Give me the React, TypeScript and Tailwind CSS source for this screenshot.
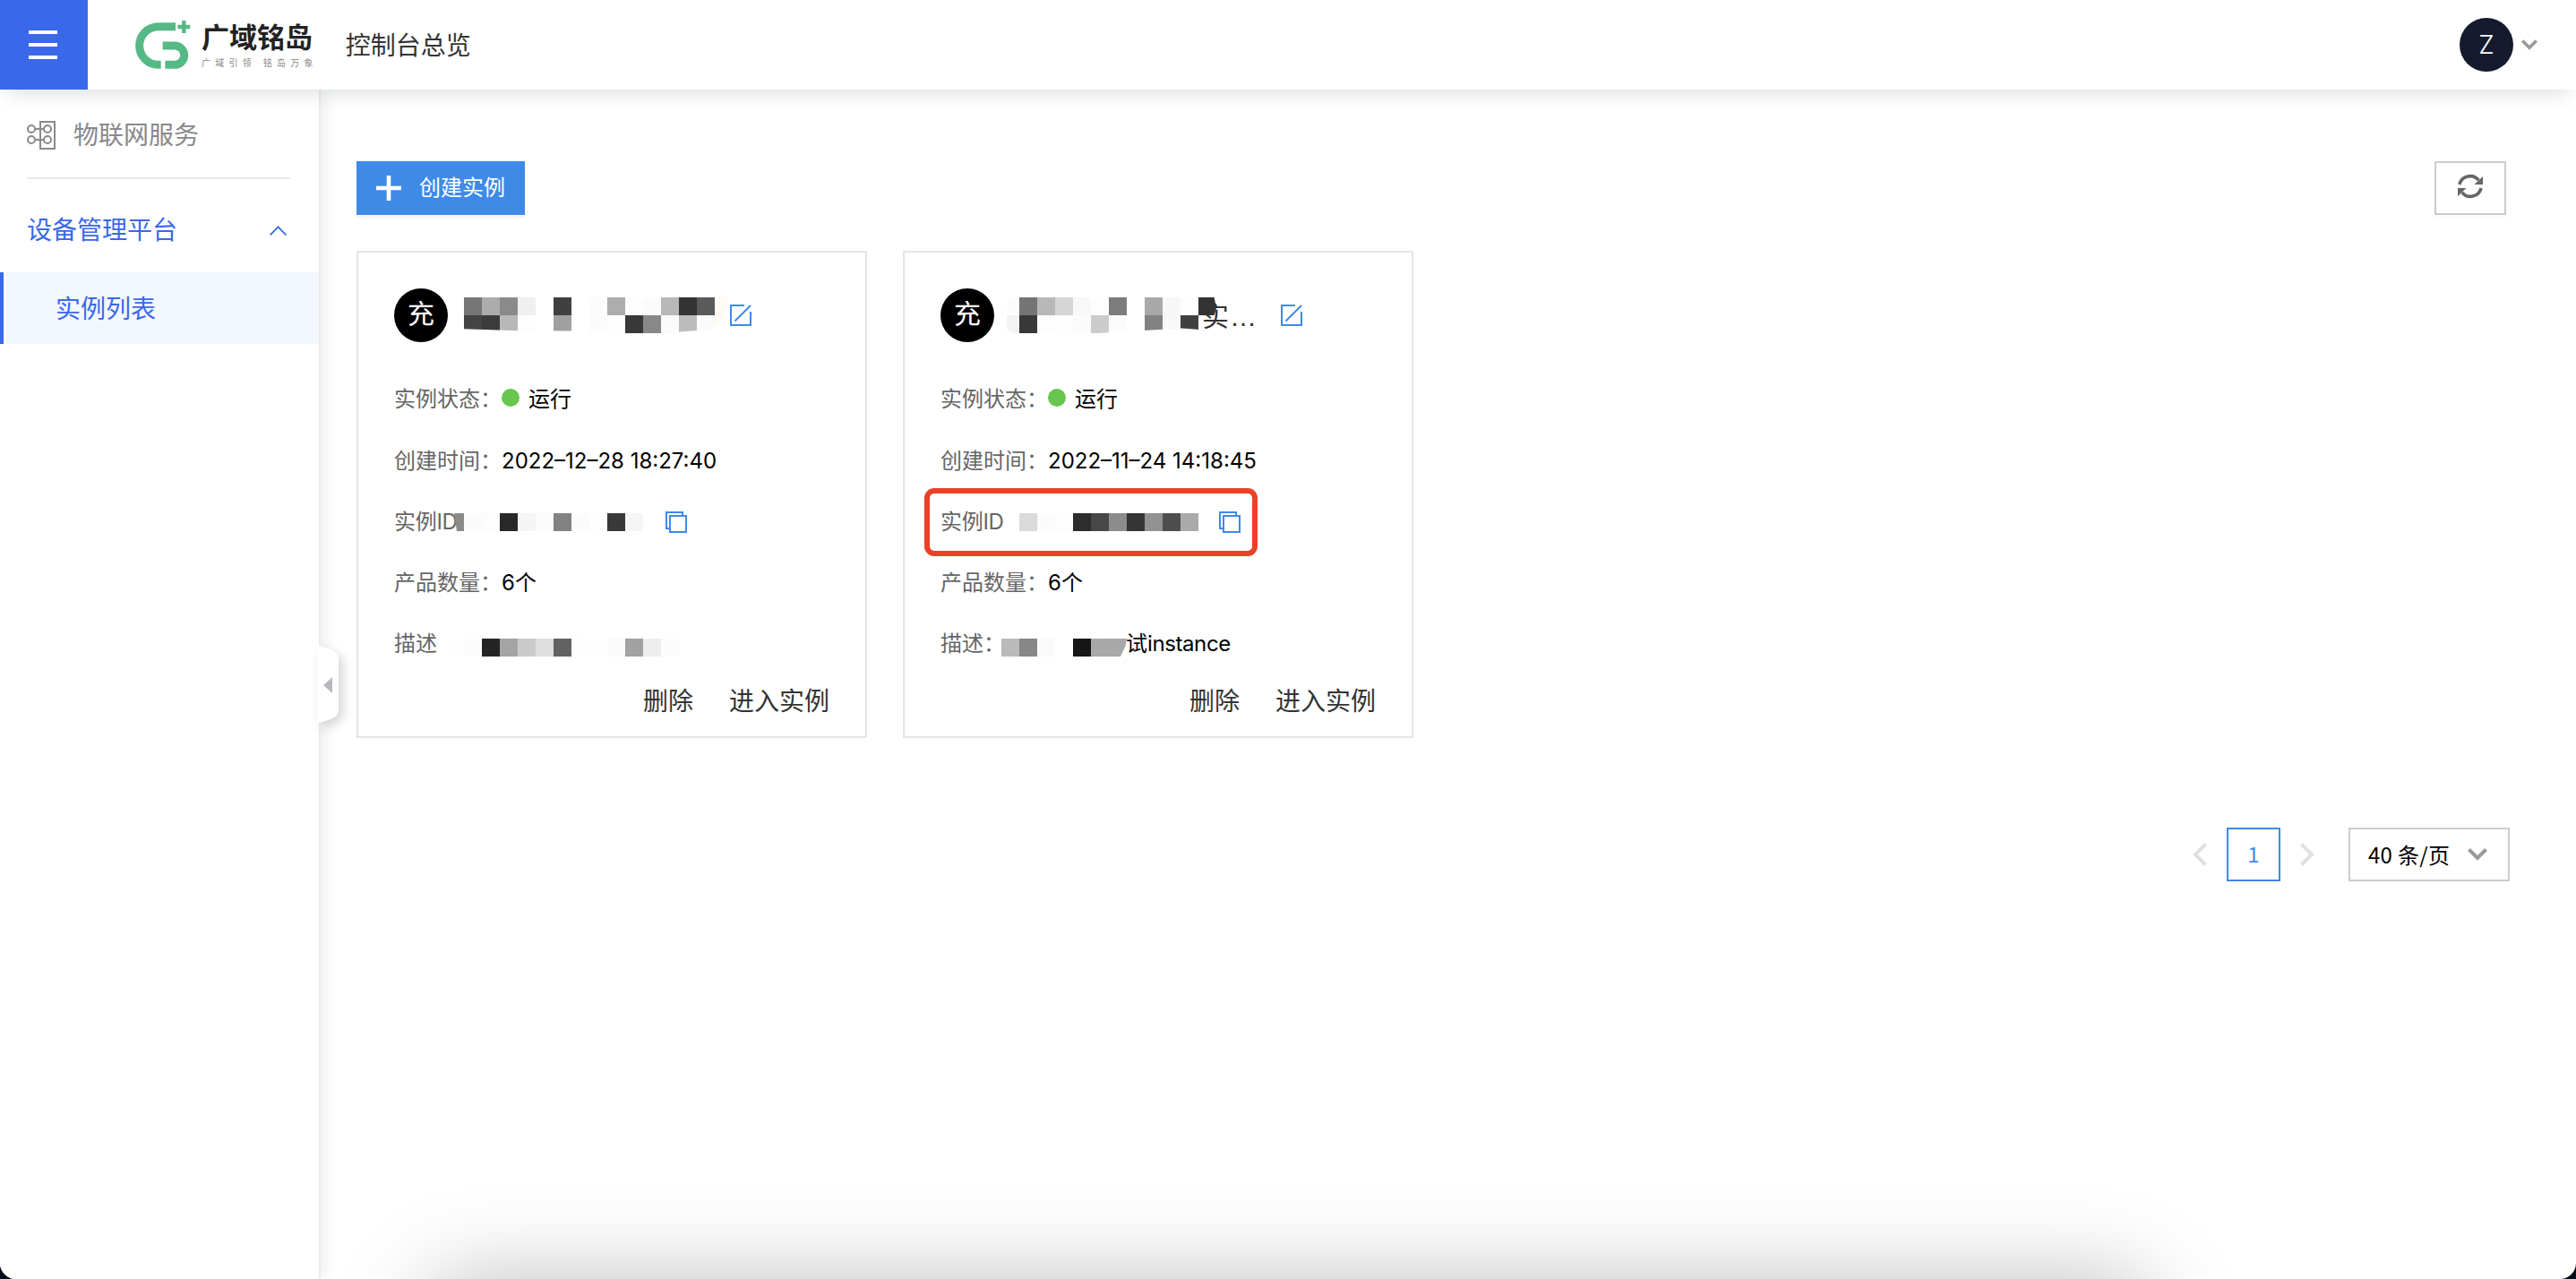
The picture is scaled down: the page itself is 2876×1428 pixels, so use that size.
import type { ReactNode } from 'react'

type Blur = { cells: string[][]; className?: string }
type Instance = {
  id: string
  createdAt: string
  name: ReactNode
  instanceId: ReactNode
  desc: ReactNode
  highlight?: boolean
}

const W = '#ffffff'

function Logo() {
  return (
    <svg className="h-[54px] w-[62px] shrink-0" viewBox="62 69 186 162" fill="none" stroke="#55b985" strokeWidth="27">
      <path d="M197 89H140a64 64 0 0 0 0 128H148" />
      <path d="M154 153H194a32 32 0 0 1 0 64H162" />
      <path d="M204 90H246M225 69V111" strokeWidth="13" />
    </svg>
  )
}

function IconService() {
  return (
    <svg className="h-8 w-8 shrink-0" viewBox="0 0 32 32" fill="none" stroke="#8a8a8e" strokeWidth="2">
      <path d="M15 1h16v30H15zM9 9h10M9 21h10" />
      <circle cx="5" cy="9" r="4" />
      <circle cx="23" cy="9" r="4" />
      <circle cx="5" cy="21" r="4" />
      <circle cx="23" cy="21" r="4" />
    </svg>
  )
}

function IconEdit() {
  return (
    <svg className="relative z-10 h-6 w-6 shrink-0" viewBox="0 0 24 24" fill="none" stroke="#3f8ae6" strokeWidth="2">
      <path d="M16 1H1v22h22V8M5.5 18.5L23 1" />
    </svg>
  )
}

function IconCopy() {
  return (
    <svg className="h-6 w-6 shrink-0" viewBox="0 0 24 24" fill="none" stroke="#3f8ae6" strokeWidth="2">
      <path d="M5 5h18v18H5zM5 19H1V1h18v4" />
    </svg>
  )
}

function IconRefresh() {
  return (
    <svg className="h-7 w-7" viewBox="0 0 28 28" fill="none" stroke="#666" strokeWidth="3.6">
      <path d="M1.9 12A12.2 12.2 0 0 1 23.2 7.2" />
      <path d="M26.1 16A12.2 12.2 0 0 1 4.8 20.8" />
      <path d="M28 3v9H18.500z M0 25v-9H9.500z" fill="#666" stroke="none" />
    </svg>
  )
}

// pixelated block that hides private values
function Mosaic({ cells, className = '' }: Blur) {
  return (
    <div className={`flex shrink-0 flex-col ${className}`}>
      {cells.map((row, i) => (
        <div key={i} className="flex">
          {row.map((c, j) => (
            <i key={j} className="h-5 w-5" style={{ background: c }} />
          ))}
        </div>
      ))}
    </div>
  )
}

const INSTANCES: Instance[] = [
  {
    id: 'a',
    createdAt: '2022–12–28 18:27:40',
    name: (
      <>
        <Mosaic
          className="ml-[18px] mr-[-3px] [clip-path:polygon(0_0,98%_0,97%_60%,92%_90%,82%_95%,76%_100%,60%_100%,45%_94%,20%_93%,0_88%)]"
          cells={[
            ['#767676', '#acacac', '#8a8a8a', '#f0f0f0', W, '#404040', W, '#fcfcfc', '#adadad', '#fdfdfd', '#fbfbfb', '#b8b8b8', '#333333', '#5a5a5a', '#fffaf3'],
            ['#444444', '#3c3c3c', '#b8b8b8', '#fdfdfd', W, '#a0a0a0', W, '#fbfbfb', '#fefefe', '#383838', '#888888', '#fafafa', '#bcbcbc', '#fbfbfb', '#fffaf3'],
          ]}
        />
        <IconEdit />
      </>
    ),
    instanceId: (
      <>
        <Mosaic
          className="ml-[-13px] mr-[25px] [clip-path:polygon(9px_0,100%_0,100%_100%,12px_100%)]"
          cells={[['#8a8a8a', '#fbfbfb', '#fdfdfd', '#282828', '#f5f5f5', '#fcfcfc', '#828282', '#fbfbfb', '#fefefe', '#393939', '#f5f5f5']]}
        />
        <IconCopy />
      </>
    ),
    desc: (
      <>
        描述
        <Mosaic
          className="ml-[10px] mt-2"
          cells={[['#fefefe', '#fcfcfc', '#242424', '#a4a4a4', '#cacaca', '#dedede', '#626262', '#fdfdfd', '#fefefe', '#fafafa', '#a2a2a2', '#eeeeee', '#fcfcfc']]}
        />
      </>
    ),
  },
  {
    id: 'b',
    createdAt: '2022–11–24 14:18:45',
    name: (
      <>
        <Mosaic
          className="z-10 ml-2 [clip-path:polygon(10px_0,99%_0,100%_30%,97%_90%,92%_90%,84%_86%,68%_92%,45%_100%,14px_100%,6px_88%,6px_30%)]"
          cells={[
            ['#fcfcfc', '#747474', '#b8b8b8', '#d5d5d5', '#f8f8f8', '#fdfdfd', '#7c7c7c', W, '#a9a9a9', '#f7f7f7', '#fdfdfd', '#333333'],
            ['#f3f3f3', '#383838', '#fdfdfd', '#fefefe', '#fbfbfb', '#cccccc', '#fcfcfc', W, '#828282', '#f8f8f8', '#404040', 'transparent'],
          ]}
        />
        <span className="ml-[-16px] mr-[24px] mt-[3px] text-[30px] leading-10 text-[#333]">
          实<span className="ml-px font-['Liberation_Sans'] tracking-[3px]">…</span>
        </span>
        <IconEdit />
      </>
    ),
    instanceId: (
      <>
        <Mosaic
          className="ml-[17px] mr-[23px]"
          cells={[['#dadada', '#fbfbfb', '#fdfdfd', '#2d2d2d', '#484848', '#8c8c8c', '#353535', '#929292', '#4e4e4e', '#aaaaaa']]}
        />
        <IconCopy />
      </>
    ),
    desc: (
      <>
        描述：
        <Mosaic
          className="ml-[-4px] mr-[-1px] mt-2 z-10 [clip-path:polygon(0_0,100%_0,99%_40%,95%_100%,0_100%)]"
          cells={[['#bababa', '#878787', '#fafafa', W, '#161616', '#a9a9a9', '#a8a8a8']]}
        />
        <span className="text-black">
          试<span className="tracking-[-0.4px]">instance</span>
        </span>
      </>
    ),
    highlight: true,
  },
]

function InstanceCard({ item }: { item: Instance }) {
  return (
    <article className="h-[544px] w-[570px] border-2 border-[#e4e4ea] px-10 pt-10 text-2xl text-[#666]">
      <div className="flex h-[60px] items-center whitespace-nowrap">
        <div className="flex h-[60px] w-[60px] shrink-0 items-center justify-center rounded-full bg-black pb-0.5 text-[30px] text-white">充</div>
        {item.name}
      </div>
      <div className="mt-[30px] whitespace-nowrap">
        <div className="flex h-[68px] items-center">
          实例状态：
          <span className="mb-1 h-5 w-5 rounded-full bg-[#67c64e]" />
          <span className="ml-2.5 text-black">运行</span>
        </div>
        <div className="flex h-[69px] items-center">
          创建时间：
          <span className="text-black">{item.createdAt}</span>
        </div>
        <div className="relative flex h-[68px] items-center">
          <span className="w-[71px] shrink-0 tracking-[-0.3px]">实例ID</span>
          {item.instanceId}
          {item.highlight && (
            <div className="absolute left-[-10px] top-[-4px] ml-[-8px] h-[76px] w-[372px] rounded-[11px] border-6 border-[#eb4128]" />
          )}
        </div>
        <div className="flex h-[68px] items-center">
          产品数量：
          <span className="text-black">6个</span>
        </div>
        <div className="flex h-[68px] items-center">{item.desc}</div>
      </div>
      <div className="flex h-[60px] items-center justify-end gap-10 pt-0.5 text-[28px] text-[#333]">
        <button>删除</button>
        <button>进入实例</button>
      </div>
    </article>
  )
}

function Header() {
  return (
    <header className="relative z-20 flex h-[100px] items-center bg-white shadow-[0_12px_20px_-8px_rgba(20,50,40,0.15)]">
      <button className="flex h-[100px] w-[98px] flex-col justify-center gap-2.5 bg-[#3a68eb] pl-8">
        <i className="h-1 w-8 bg-white" />
        <i className="h-1 w-8 bg-white" />
        <i className="h-1 w-8 bg-white" />
      </button>
      <div className="ml-[53px] flex items-center">
        <Logo />
        <div className="ml-3 flex flex-col">
          <b className="text-[31px] leading-9 text-[#222]">广域铭岛</b>
          <span className="mt-1 whitespace-pre text-[10px] leading-3 tracking-[5.2px] text-[#888]">广域引领 铭岛万象</span>
        </div>
      </div>
      <h1 className="ml-[31px] pt-0.5 text-[28px] text-[#333]">控制台总览</h1>
      <div className="ml-auto mr-[43px] flex items-center gap-[9px]">
        <div className="flex h-[60px] w-[60px] items-center justify-center rounded-full bg-[#151a2e] text-[28px] font-light text-white">Z</div>
        <svg className="h-3 w-[18px]" viewBox="0 0 18 12" fill="none" stroke="#999" strokeWidth="3.5">
          <path d="M1.200 1.500L9 9.300l7.800-7.800" />
        </svg>
      </div>
    </header>
  )
}

function Sidebar() {
  return (
    <aside className="relative z-10 w-[356px] shrink-0 bg-white text-[28px] shadow-[2px_0_0_#ececec,6px_0_16px_rgba(0,0,0,0.08)]">
      <div className="ml-[30px] mr-8 flex h-[100px] items-center gap-5 border-b-2 border-[#e8e8e8] pt-1 text-[#88888c]">
        <IconService />
        物联网服务
      </div>
      <div className="flex h-[104px] items-center justify-between pl-[30px] pr-9 pt-2.5 text-[#3a68eb]">
        设备管理平台
        <svg className="h-[11px] w-[19px]" viewBox="0 0 19 11" fill="none" stroke="#3a68eb" strokeWidth="1.800">
          <path d="M.6 10.400L9.500 1.400l8.900 9" />
        </svg>
      </div>
      <div className="flex h-20 items-center border-l-4 border-[#3a68eb] bg-[#f3f7ff] pl-[58px] pt-0.5 text-[#3a68eb]">实例列表</div>
      <svg className="absolute left-[354px] top-[620px] h-[88px] w-6 drop-shadow-[5px_5px_6px_rgba(0,0,0,0.16)]" viewBox="0 0 24 88">
        <path d="M0 0L15 5Q24 8 24 16V72Q24 80 15 83L0 88z" fill="#fff" />
        <path d="M7 45L17 36v18z" fill="#b8b9be" />
      </svg>
    </aside>
  )
}

function Pagination() {
  return (
    <div className="mt-[100px] flex items-center justify-end pr-[74px] text-2xl">
      <svg className="h-[26px] w-4" viewBox="0 0 16 26" fill="none" stroke="#e0e0e0" strokeWidth="4">
        <path d="M14.500 1.500L3 13l11.500 11.500" />
      </svg>
      <button className="ml-[22px] mr-[22px] h-[60px] w-[60px] border-2 border-[#3f8ae6] pb-0.5 text-[#3f8ae6] font-['Noto_Sans_CJK_SC',sans-serif]">1</button>
      <svg className="h-[26px] w-4" viewBox="0 0 16 26" fill="none" stroke="#e0e0e0" strokeWidth="4">
        <path d="M1.500 1.500L13 13 1.500 24.500" />
      </svg>
      <div className="ml-[38px] flex h-[60px] w-[180px] items-center justify-between border-2 border-[#ccc] pl-5 pr-[23px] text-black font-['Noto_Sans_CJK_SC',sans-serif]">
        <span className="tracking-[0.3px]">40 条/页</span>
        <svg className="h-[14px] w-[22px]" viewBox="0 0 22 14" fill="none" stroke="#999" strokeWidth="4">
          <path d="M1.500 1.500L11 11l9.500-9.500" />
        </svg>
      </div>
    </div>
  )
}

export default function App() {
  return (
    <div className="h-[1428px] w-[2876px] bg-[#050d18]">
      <div className="relative flex h-full flex-col overflow-hidden rounded-b-[18px] bg-white font-['Inter','Noto_Sans_CJK_SC',sans-serif]">
        <Header />
        <div className="flex flex-1">
          <Sidebar />
          <main className="flex-1 pl-[42px] pt-20">
            <div className="flex items-center justify-between pr-[78px]">
              <button className="flex h-[60px] w-[188px] items-center bg-[#3f8ae6] pl-[22px] text-2xl text-white shadow-[0_4px_0_#f6f6f6]">
                <svg className="mr-5 h-7 w-7" viewBox="0 0 28 28" stroke="#fff" strokeWidth="4.600">
                  <path d="M0 14h28M14 0v28" />
                </svg>
                创建实例
              </button>
              <button className="flex h-[60px] w-20 items-center justify-center border-2 border-[#ccc] pb-1 shadow-[0_4px_0_#fbfbfb]">
                <IconRefresh />
              </button>
            </div>
            <div className="mt-10 flex gap-10">
              {INSTANCES.map((item) => (
                <InstanceCard key={item.id} item={item} />
              ))}
            </div>
            <Pagination />
          </main>
        </div>
        {/* soft shadow rising from under the window edge */}
        <div className="absolute left-[482px] top-[1436px] z-30 h-[120px] w-[1914px] rounded-[40px] shadow-[0_0_100px_8px_rgba(0,0,0,0.26)]" />
      </div>
    </div>
  )
}
